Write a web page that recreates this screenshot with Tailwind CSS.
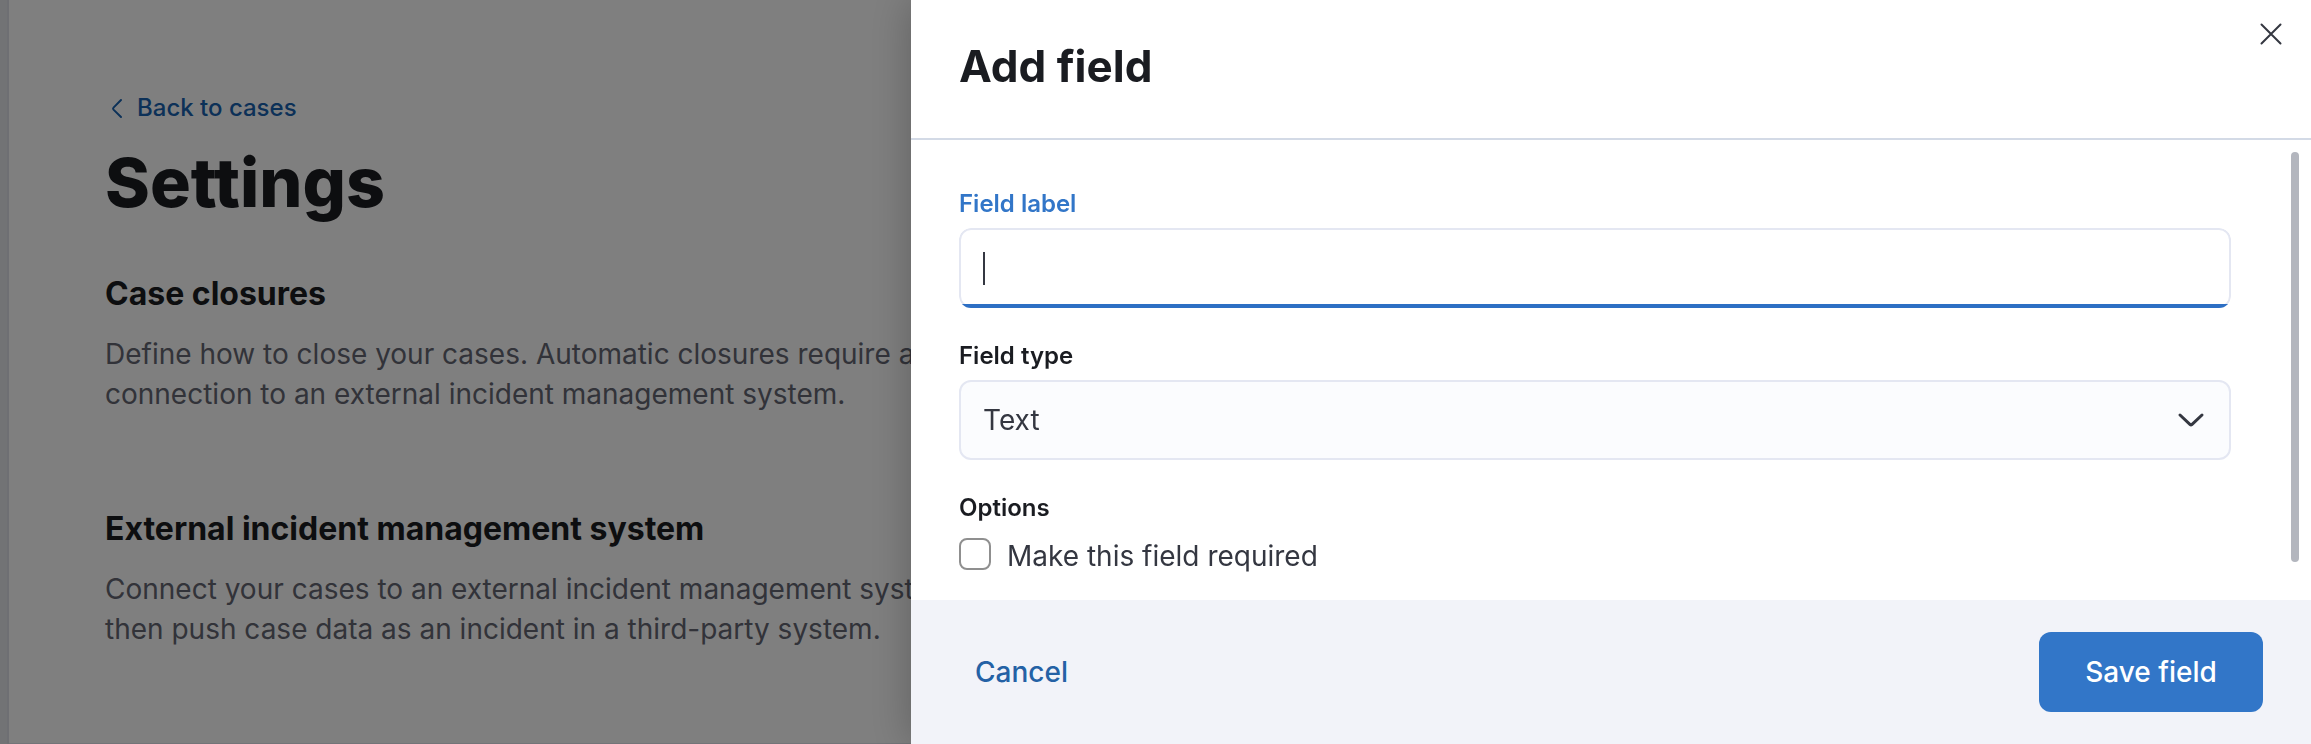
<!DOCTYPE html>
<html lang="en">
<head>
<meta charset="utf-8">
<meta name="viewport" content="width=device-width, initial-scale=1">
<title>Settings - Add field</title>
<script src="https://cdn.jsdelivr.net/npm/@tailwindcss/browser@4"></script>
</head>
<body class="relative min-h-screen overflow-hidden bg-white font-['Inter',sans-serif] text-[28px] leading-10 text-[#343741] antialiased">

<div class="flex min-h-screen">
  <div class="w-[9px] shrink-0 border-r-2 border-[#dcdfe6] bg-[#e4e6eb]"></div>
  <main class="flex-1 border-b border-[#e6e9f1] pl-24 pt-21">
    <a href="#" class="flex w-fit items-center gap-2 text-2xl leading-12 font-medium text-[#1862b0]">
      <svg class="size-6" viewBox="0 0 24 24" fill="none" stroke="currentColor" stroke-width="2" stroke-linecap="round" stroke-linejoin="round" aria-hidden="true"><path d="M16 4 8.500 11.600a1.500 1.500 0 0 0 0 2L16 21"/></svg>
      Back to cases
    </a>
    <h1 class="mt-2.5 text-[68px] leading-20 font-extrabold text-[#1a1c21]">Settings</h1>
    <section class="mt-12">
      <h2 class="text-[32px] leading-12 font-bold text-[#1a1c21]">Case closures</h2>
      <p class="mt-4 text-[#646673]">Define how to close your cases. Automatic closures require a<br>connection to an external incident management system.</p>
    </section>
    <section class="mt-[91px]">
      <h2 class="text-[32px] leading-12 font-bold text-[#1a1c21]">External incident management system</h2>
      <p class="mt-4 text-[#646673]">Connect your cases to an external incident management system. You can<br>then push case data as an incident in a third-party system.</p>
    </section>
  </main>
</div>

<div class="fixed inset-0 bg-black/50"></div>

<aside role="dialog" aria-labelledby="flyout-title" class="fixed inset-y-0 right-0 flex w-[1400px] max-w-full flex-col bg-white shadow-[0_0_40px_rgba(0,0,0,0.25)]">
  <header class="flex h-[140px] shrink-0 items-start justify-between border-b-2 border-[#d3dae6] pl-12 pr-5">
    <h2 id="flyout-title" class="pt-9 text-[44px] leading-[60px] font-bold text-[#1a1c21]">Add field</h2>
    <button type="button" aria-label="Close" class="mt-[18px] p-1">
      <svg class="size-8 text-[#343741]" viewBox="0 0 32 32" fill="none" stroke="currentColor" stroke-width="2" stroke-linecap="round" aria-hidden="true"><path d="m6.500 2.500 19 19M25.500 2.500l-19 19"/></svg>
    </button>
  </header>

  <form class="relative min-h-0 flex-1 overflow-hidden pl-12 pr-20 pt-12" id="field-form">
    <div>
      <label for="label" class="block text-2xl leading-8 font-semibold text-[#3276c8]">Field label</label>
      <div class="relative mt-2 overflow-hidden rounded-xl after:absolute after:inset-x-0 after:bottom-0 after:h-1 after:bg-[#2d6fc4]">
        <input id="label" type="text" class="block h-20 w-full rounded-xl border-2 border-[#e4e7f2] bg-white px-6 caret-transparent outline-none">
        <span class="absolute left-6 top-6 h-[33px] w-0.5 bg-[#343741]" aria-hidden="true"></span>
      </div>
    </div>
    <div class="mt-8">
      <label for="type" class="block text-2xl leading-8 font-semibold text-[#1a1c21]">Field type</label>
      <div class="relative mt-2">
        <select id="type" class="block h-20 w-full appearance-none rounded-xl border-2 border-[#e4e7f2] bg-[#fbfcfe] px-[22px] text-[#343741]">
          <option>Text</option>
        </select>
        <svg class="pointer-events-none absolute right-6 top-6 size-8 text-[#343741]" viewBox="0 0 32 32" fill="none" stroke="currentColor" stroke-width="3" stroke-linecap="round" stroke-linejoin="round" aria-hidden="true"><path d="m5 11 10.200 9.700q.8.700 1.600 0L27 11"/></svg>
      </div>
    </div>
    <fieldset class="mt-8">
      <legend class="text-2xl leading-8 font-semibold text-[#1a1c21]">Options</legend>
      <div class="mt-3.5 flex items-start gap-4">
        <input id="required" type="checkbox" class="size-8 appearance-none rounded-lg border-2 border-[#8f8f8f] bg-white">
        <label for="required" class="leading-9">Make this field required</label>
      </div>
    </fieldset>
    <div class="absolute right-3 top-3 bottom-[38px] w-2 rounded-full bg-[#b3b6be]" aria-hidden="true"></div>
  </form>

  <footer class="flex h-36 shrink-0 items-center justify-between bg-[#f2f3f9] px-12 font-medium">
    <button type="button" class="h-20 px-4 text-[#2461a5]">Cancel</button>
    <button type="submit" form="field-form" class="h-20 w-56 rounded-xl bg-[#3276c8] text-white">Save field</button>
  </footer>
</aside>
</body>
</html>
